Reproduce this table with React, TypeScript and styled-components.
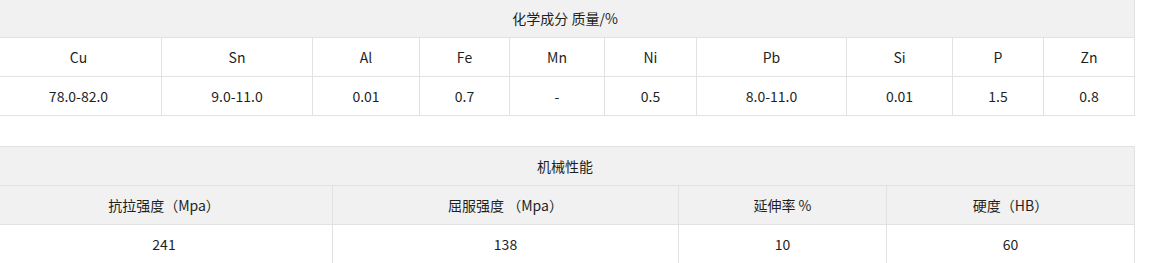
import styled, { createGlobalStyle } from 'styled-components'

const GlobalStyle = createGlobalStyle`
  body {
    margin: -2px 0 0 -5px;
    background-color: #ffffff;
    font-family: "Noto Sans CJK SC", "Noto Sans", sans-serif;
    color: #1f1f1f;
  }
`

const Page = styled.div`
  width: 1140px;
  display: flex;
  flex-direction: column;
  gap: 30px;
`

const Table = styled.table`
  width: 1140px;
  border-collapse: collapse;
  table-layout: fixed;
`

const Col = styled.col<{ $w: number }>`
  width: ${(p) => p.$w}px;
`

const Cell = styled.td<{ $head?: boolean }>`
  height: 38px;
  padding: 0;
  border: 1px solid #e2e2e2;
  background-color: ${(p) => (p.$head ? '#f1f1f1' : '#ffffff')};
  font-size: 14px;
  line-height: 38px;
  text-align: center;
  white-space: nowrap;
`

const chemCols = [166, 151, 107, 90, 95, 92, 150, 106, 91, 91]
const elements = ['Cu', 'Sn', 'Al', 'Fe', 'Mn', 'Ni', 'Pb', 'Si', 'P', 'Zn']
const amounts = ['78.0-82.0', '9.0-11.0', '0.01', '0.7', '-', '0.5', '8.0-11.0', '0.01', '1.5', '0.8']

const mechCols = [337, 346, 208, 248]
const props = ['抗拉强度（Mpa）', '屈服强度 （Mpa）', '延伸率 %', '硬度（HB）']
const values = ['241', '138', '10', '60']

export default function App() {
  return (
    <>
      <GlobalStyle />
      <Page>
        <Table>
          <colgroup>
            {chemCols.map((w, i) => (
              <Col key={i} $w={w} />
            ))}
          </colgroup>
          <tbody>
            <tr>
              <Cell $head colSpan={10}>
                化学成分 质量/%
              </Cell>
            </tr>
            <tr>
              {elements.map((e) => (
                <Cell key={e}>{e}</Cell>
              ))}
            </tr>
            <tr>
              {amounts.map((a, i) => (
                <Cell key={i}>{a}</Cell>
              ))}
            </tr>
          </tbody>
        </Table>

        <Table>
          <colgroup>
            {mechCols.map((w, i) => (
              <Col key={i} $w={w} />
            ))}
          </colgroup>
          <tbody>
            <tr>
              <Cell $head colSpan={4}>
                机械性能
              </Cell>
            </tr>
            <tr>
              {props.map((p) => (
                <Cell $head key={p}>
                  {p}
                </Cell>
              ))}
            </tr>
            <tr>
              {values.map((v, i) => (
                <Cell key={i}>{v}</Cell>
              ))}
            </tr>
          </tbody>
        </Table>
      </Page>
    </>
  )
}
